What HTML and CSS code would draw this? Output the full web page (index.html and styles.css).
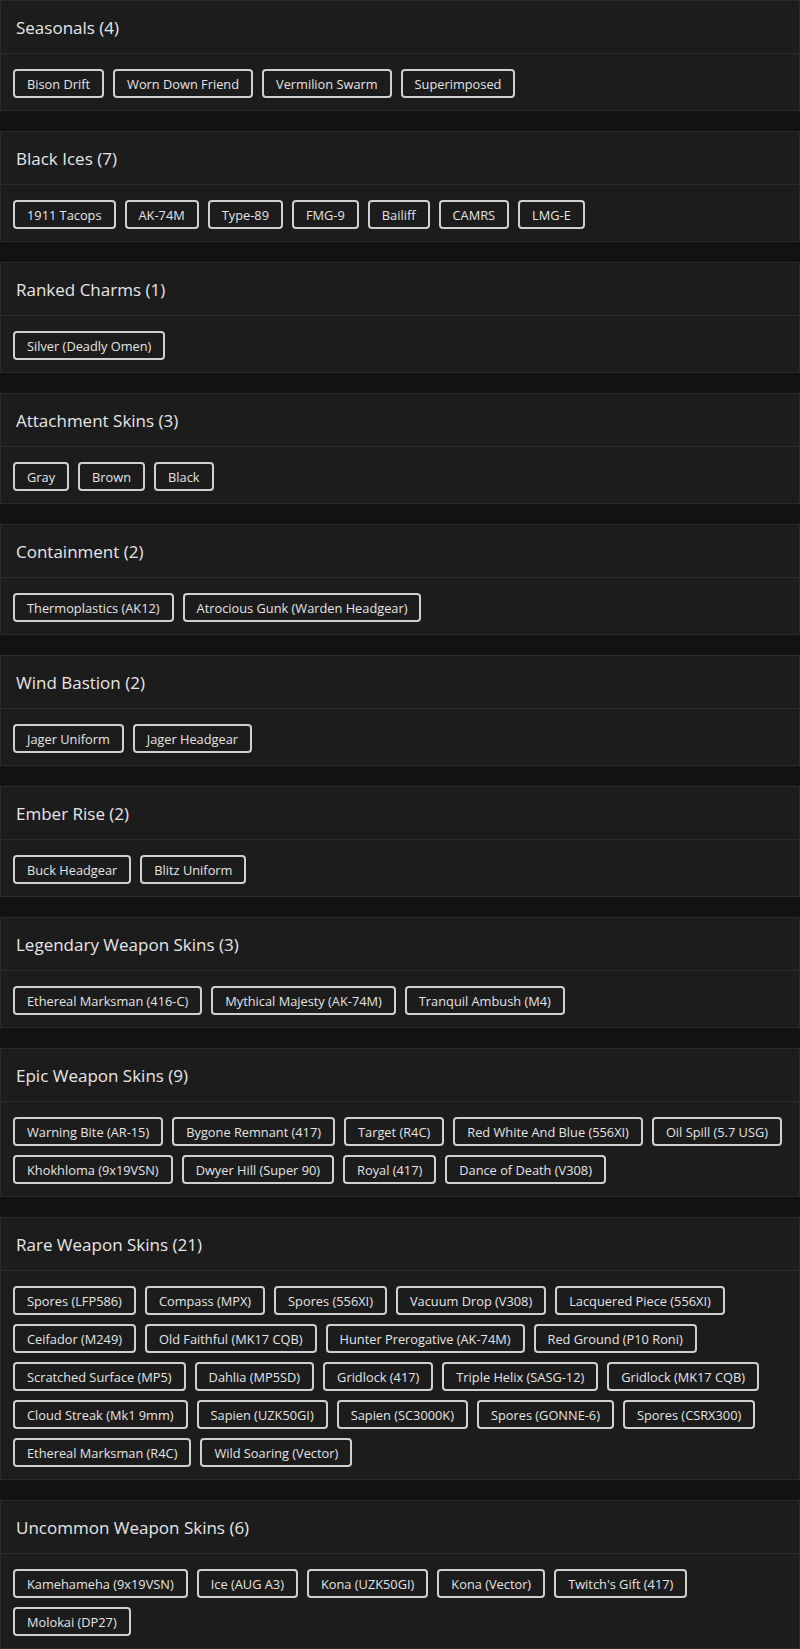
FILE: index.html
```html
<!DOCTYPE html>
<html>
<head>
<meta charset="utf-8">
<link rel="stylesheet" href="styles.css">
</head>
<body>
<main class="list">
  <section class="card">
    <h2 class="card-title">Seasonals (4)</h2>
    <div class="tags">
      <span class="tag">Bison Drift</span><span class="tag">Worn Down Friend</span><span class="tag">Vermilion Swarm</span><span class="tag">Superimposed</span>
    </div>
  </section>
  <section class="card">
    <h2 class="card-title">Black Ices (7)</h2>
    <div class="tags">
      <span class="tag">1911 Tacops</span><span class="tag">AK-74M</span><span class="tag">Type-89</span><span class="tag">FMG-9</span><span class="tag">Bailiff</span><span class="tag">CAMRS</span><span class="tag">LMG-E</span>
    </div>
  </section>
  <section class="card">
    <h2 class="card-title">Ranked Charms (1)</h2>
    <div class="tags">
      <span class="tag">Silver (Deadly Omen)</span>
    </div>
  </section>
  <section class="card">
    <h2 class="card-title">Attachment Skins (3)</h2>
    <div class="tags">
      <span class="tag">Gray</span><span class="tag">Brown</span><span class="tag">Black</span>
    </div>
  </section>
  <section class="card">
    <h2 class="card-title">Containment (2)</h2>
    <div class="tags">
      <span class="tag">Thermoplastics (AK12)</span><span class="tag">Atrocious Gunk (Warden Headgear)</span>
    </div>
  </section>
  <section class="card">
    <h2 class="card-title">Wind Bastion (2)</h2>
    <div class="tags">
      <span class="tag">Jager Uniform</span><span class="tag">Jager Headgear</span>
    </div>
  </section>
  <section class="card">
    <h2 class="card-title">Ember Rise (2)</h2>
    <div class="tags">
      <span class="tag">Buck Headgear</span><span class="tag">Blitz Uniform</span>
    </div>
  </section>
  <section class="card">
    <h2 class="card-title">Legendary Weapon Skins (3)</h2>
    <div class="tags">
      <span class="tag">Ethereal Marksman (416-C)</span><span class="tag">Mythical Majesty (AK-74M)</span><span class="tag">Tranquil Ambush (M4)</span>
    </div>
  </section>
  <section class="card">
    <h2 class="card-title">Epic Weapon Skins (9)</h2>
    <div class="tags">
      <span class="tag">Warning Bite (AR-15)</span><span class="tag">Bygone Remnant (417)</span><span class="tag">Target (R4C)</span><span class="tag">Red White And Blue (556XI)</span><span class="tag">Oil Spill (5.7 USG)</span><span class="tag">Khokhloma (9x19VSN)</span><span class="tag">Dwyer Hill (Super 90)</span><span class="tag">Royal (417)</span><span class="tag">Dance of Death (V308)</span>
    </div>
  </section>
  <section class="card">
    <h2 class="card-title">Rare Weapon Skins (21)</h2>
    <div class="tags">
      <span class="tag">Spores (LFP586)</span><span class="tag">Compass (MPX)</span><span class="tag">Spores (556XI)</span><span class="tag">Vacuum Drop (V308)</span><span class="tag">Lacquered Piece (556XI)</span><span class="tag">Ceifador (M249)</span><span class="tag">Old Faithful (MK17 CQB)</span><span class="tag">Hunter Prerogative (AK-74M)</span><span class="tag">Red Ground (P10 Roni)</span><span class="tag">Scratched Surface (MP5)</span><span class="tag">Dahlia (MP5SD)</span><span class="tag">Gridlock (417)</span><span class="tag">Triple Helix (SASG-12)</span><span class="tag">Gridlock (MK17 CQB)</span><span class="tag">Cloud Streak (Mk1 9mm)</span><span class="tag">Sapien (UZK50GI)</span><span class="tag">Sapien (SC3000K)</span><span class="tag">Spores (GONNE-6)</span><span class="tag">Spores (CSRX300)</span><span class="tag">Ethereal Marksman (R4C)</span><span class="tag">Wild Soaring (Vector)</span>
    </div>
  </section>
  <section class="card">
    <h2 class="card-title">Uncommon Weapon Skins (6)</h2>
    <div class="tags">
      <span class="tag">Kamehameha (9x19VSN)</span><span class="tag">Ice (AUG A3)</span><span class="tag">Kona (UZK50GI)</span><span class="tag">Kona (Vector)</span><span class="tag">Twitch's Gift (417)</span><span class="tag">Molokai (DP27)</span>
    </div>
  </section>
</main>
</body>
</html>
```

FILE: styles.css
```css
html, body {
  margin: 0;
  padding: 0;
  background: #121212;
}
body {
  font-family: "Open Sans", "Noto Sans", sans-serif;
  color: #e2e2e2;
}
.list {
  display: flex;
  flex-direction: column;
  gap: 20px;
}
.card {
  background: #1c1c1c;
  border: 1px solid #2b2b2b;
}
.card-title {
  margin: 0;
  height: 52px;
  padding: 0 15px;
  display: flex;
  align-items: center;
  font-size: 17px;
  font-weight: 500;
  color: #e6e6e6;
  border-bottom: 1px solid #2d2d2d;
}
.tags {
  display: flex;
  flex-wrap: wrap;
  gap: 9px 9px;
  padding: 15px 12px 12px;
}
.tag {
  display: inline-flex;
  align-items: center;
  height: 25px;
  padding: 0 12px;
  border: 2px solid #cfcfcf;
  border-radius: 4px;
  font-size: 12.8px;
  color: #e4e4e4;
  background: #1c1c1c;
  white-space: nowrap;
}
```
